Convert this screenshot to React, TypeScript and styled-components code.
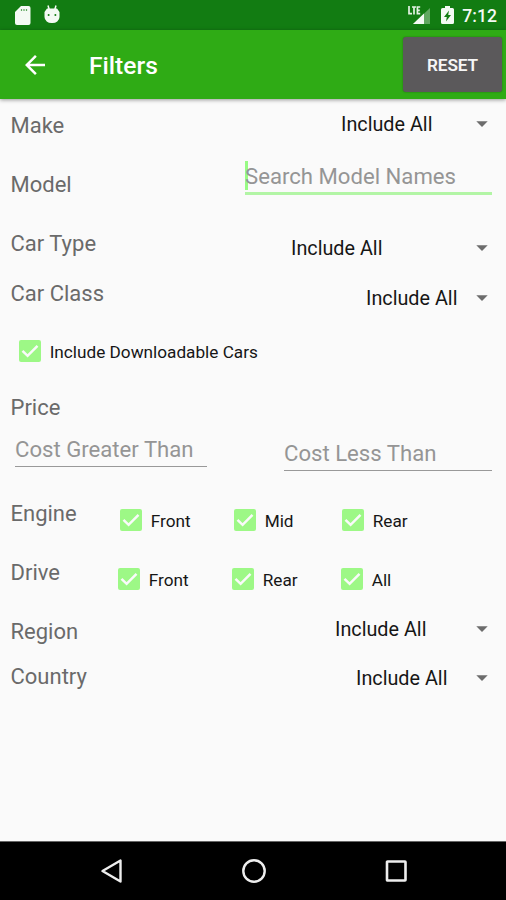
import React from "react";
import styled, { createGlobalStyle } from "styled-components";

const GlobalStyle = createGlobalStyle`
  *, *::before, *::after { box-sizing: border-box; }
  body { margin: 0; background: #fafafa; font-family: Roboto, "Liberation Sans", sans-serif; }
  button, input { font-family: inherit; }
`;

const Screen = styled.div`
  width: 506px;
  height: 900px;
  display: flex;
  flex-direction: column;
  overflow: hidden;
  background: #fafafa;
`;

const StatusBar = styled.header`
  height: 30px;
  flex: none;
  display: flex;
  align-items: center;
  padding: 0 9px 0 14px;
  background: #127c12;
  color: #f4faf4;
`;

const StatusIcon = styled.svg<{ $gap: number }>`
  display: block;
  flex: none;
  margin-right: ${(p) => p.$gap}px;
`;

const Spacer = styled.div`
  flex: 1;
`;

const Clock = styled.span`
  font-size: 17.6px;
  font-weight: 500;
  line-height: 20px;
  padding-top: 2px;
`;

const AppBar = styled.div`
  height: 69px;
  flex: none;
  display: flex;
  align-items: center;
  padding: 0 4px 0 20px;
  background: #2fab15;
  color: #fff;
  box-shadow: 0 1px 4px rgba(0, 0, 0, 0.4);
`;

const BackButton = styled.button`
  width: 30px;
  height: 30px;
  padding: 0;
  border: 0;
  background: none;
  color: #fff;
`;

const Title = styled.h1`
  margin: 0 0 0 39px;
  flex: 1;
  font-size: 24.6px;
  font-weight: 500;
  line-height: 30px;
  padding-top: 2px;
`;

const ResetButton = styled.button`
  width: 99px;
  height: 55px;
  padding: 1px 0 0;
  border: 0;
  border-radius: 3px;
  background: #5b595b;
  color: #f6f6f6;
  font-size: 17.2px;
  font-weight: 600;
  letter-spacing: -0.1px;
  box-shadow: 0 0 2px rgba(0, 0, 0, 0.35);
`;

const Form = styled.main`
  flex: 1;
  display: flex;
  flex-direction: column;
  padding: 13px 14px 0 11px;
`;

const Row = styled.div<{ $height: number }>`
  height: ${(p) => p.$height}px;
  flex: none;
  display: flex;
  align-items: flex-start;
  justify-content: space-between;
`;

const Label = styled.label<{ $lift?: number }>`
  margin: ${(p) => 1 - (p.$lift ?? 0)}px 0 0 -0.5px;
  font-size: 22px;
  line-height: 26px;
  color: #6a6a6a;
`;

const Select = styled.button<{ $width: number; $shift: number }>`
  width: ${(p) => p.$width}px;
  height: 26px;
  margin-top: ${(p) => p.$shift}px;
  padding: 0 4px 0 0;
  border: 0;
  background: none;
  display: flex;
  align-items: center;
  justify-content: space-between;
  font-size: 19.8px;
  line-height: 26px;
  color: #161616;
  white-space: nowrap;
`;

const SelectValue = styled.span`
  padding-top: 1px;
`;

const Field = styled.div<{ $width: number; $shift: number; $active?: boolean }>`
  width: ${(p) => p.$width}px;
  height: 33px;
  margin-top: ${(p) => p.$shift}px;
  display: flex;
  border-bottom: ${(p) => (p.$active ? "3px solid #b2f5a5" : "1px solid #999")};
`;

const Caret = styled.span`
  width: 3px;
  height: 29px;
  margin: -1px -3px 0 0;
  background: #98fb85;
`;

const Input = styled.input<{ $lift?: number }>`
  width: 100%;
  height: 30px;
  margin-top: ${(p) => -(p.$lift ?? 0)}px;
  padding: 0;
  border: 0;
  outline: 0;
  background: none;
  font-size: 22.15px;
  &::placeholder { color: #959595; opacity: 1; }
`;

const PriceFields = styled.div`
  height: 72px;
  flex: none;
  display: flex;
  align-items: flex-start;
  justify-content: space-between;
  padding-left: 4px;
`;

const Options = styled.div<{ $columns: string; $shift: number; $indent: number }>`
  display: grid;
  grid-template-columns: ${(p) => p.$columns};
  margin-top: ${(p) => p.$shift}px;
  padding-left: ${(p) => p.$indent}px;
  flex: none;
`;

const Check = styled.div`
  height: 26px;
  display: flex;
  align-items: center;
  gap: 8.7px;
  font-size: 17.2px;
  color: #161616;
  white-space: nowrap;
`;

const CheckLabel = styled.span`
  line-height: 24px;
  padding-top: 1px;
`;

const Box = styled.svg`
  display: block;
  flex: none;
  width: 22px;
  height: 22px;
  border-radius: 2px;
  background: #9df886;
`;

const NavBar = styled.nav`
  height: 59px;
  flex: none;
  display: flex;
  align-items: center;
  justify-content: space-between;
  padding: 0 98px 0 100px;
  border-top: 1px solid #666;
  background: #000;
`;

const Arrow = () => (
  <svg width="12" height="8" viewBox="0 0 12 8">
    <path d="M.3 1.200h11.400L6 7z" fill="#6c6c6c" />
  </svg>
);

function Dropdown({ width, shift }: { width: number; shift: number }) {
  return (
    <Select $width={width} $shift={shift}>
      <SelectValue>Include All</SelectValue>
      <Arrow />
    </Select>
  );
}

function Checkbox({ label }: { label: string }) {
  return (
    <Check>
      <Box viewBox="0 0 22 22">
        <path d="M3.500 10.800 8.600 15.800 18.500 5.800" fill="none" stroke="#fafafa" strokeWidth="2.500" />
      </Box>
      <CheckLabel>{label}</CheckLabel>
    </Check>
  );
}

export default function App() {
  return (
    <Screen>
      <GlobalStyle />
      <StatusBar>
        <StatusIcon $gap={13} width="17" height="20" viewBox="0 0 17 20">
          <path d="M7 1h7.500a2 2 0 0 1 2 2v15a2 2 0 0 1-2 2H3a2 2 0 0 1-2-2V7z" fill="#f4faf4" />
          <path d="M7.500 4v2M10 4v2M12.500 4v2" stroke="#127c12" strokeWidth="1.200" opacity=".65" />
        </StatusIcon>
        <StatusIcon $gap={0} width="16" height="20" viewBox="0 0 16 20">
          <path d="M4 .5l1.200 4M12 .5l-1.200 4" stroke="#f4faf4" strokeWidth="1.500" />
          <path d="M3 3.500h10l2.500 3.500v5A7 6 0 0 1 8 18a7 6 0 0 1-7.500-6V7z" fill="#f4faf4" />
          <circle cx="4.600" cy="10" r="1" fill="#127c12" />
          <circle cx="11.400" cy="10" r="1" fill="#127c12" />
        </StatusIcon>
        <Spacer />
        <StatusIcon $gap={9} width="26" height="20" viewBox="0 0 26 20">
          <path d="M24 3v16H7z" fill="#f4faf4" opacity=".35" />
          <path d="M18 8.500V19H7z" fill="#f4faf4" />
          <path d="M3 1v7.700h3M6 2h4M8 2v7.500M14.200 2h-2.800v6.700h2.800M11.400 5.400h2.400" fill="none" stroke="#e4f2e4" strokeWidth="1.700" />
        </StatusIcon>
        <StatusIcon $gap={8} width="13" height="20" viewBox="0 0 13 20">
          <path d="M4 1h5v2h2.500A1.500 1.500 0 0 1 13 4.500v13a1.500 1.500 0 0 1-1.500 1.500h-10A1.500 1.500 0 0 1 0 17.500v-13A1.500 1.500 0 0 1 1.500 3H4z" fill="#f4faf4" />
          <path d="M8 5.500 3 12h2.800L5 16.500 10 10H7.200z" fill="#127c12" />
        </StatusIcon>
        <Clock>7:12</Clock>
      </StatusBar>
      <AppBar>
        <BackButton aria-label="Back">
          <svg width="30" height="30" viewBox="0 0 24 24">
            <path d="M20 11H7.830l5.590-5.590L12 4l-8 8 8 8 1.410-1.410L7.830 13H20z" fill="#fff" />
          </svg>
        </BackButton>
        <Title>Filters</Title>
        <ResetButton>RESET</ResetButton>
      </AppBar>
      <Form>
        <Row $height={59}>
          <Label>Make</Label>
          <Dropdown width={151} shift={-1} />
        </Row>
        <Row $height={60}>
          <Label>Model</Label>
          <Field $width={247} $shift={-9} $active>
            <Caret />
            <Input $lift={1} placeholder="Search Model Names" />
          </Field>
        </Row>
        <Row $height={49}>
          <Label $lift={1}>Car Type</Label>
          <Dropdown width={201} shift={4} />
        </Row>
        <Row $height={59}>
          <Label>Car Class</Label>
          <Dropdown width={126} shift={5} />
        </Row>
        <Row $height={55}>
          <Options $columns="auto" $shift={-1} $indent={8}>
            <Checkbox label="Include Downloadable Cars" />
          </Options>
        </Row>
        <Row $height={34}>
          <Label>Price</Label>
        </Row>
        <PriceFields>
          <Field $width={192} $shift={6}>
            <Input placeholder="Cost Greater Than" />
          </Field>
          <Field $width={208} $shift={10}>
            <Input placeholder="Cost Less Than" />
          </Field>
        </PriceFields>
        <Row $height={59}>
          <Label>Engine</Label>
          <Options $columns="114px 108px 150px" $shift={7} $indent={0}>
            <Checkbox label="Front" />
            <Checkbox label="Mid" />
            <Checkbox label="Rear" />
          </Options>
        </Row>
        <Row $height={59}>
          <Label>Drive</Label>
          <Options $columns="114px 109px 151px" $shift={7} $indent={0}>
            <Checkbox label="Front" />
            <Checkbox label="Rear" />
            <Checkbox label="All" />
          </Options>
        </Row>
        <Row $height={45}>
          <Label>Region</Label>
          <Dropdown width={157} shift={-2} />
        </Row>
        <Row $height={40}>
          <Label>Country</Label>
          <Dropdown width={136} shift={2} />
        </Row>
      </Form>
      <NavBar>
        <svg width="23" height="26" viewBox="0 0 23 26">
          <path d="M20.500 2.500v21L2.500 13z" fill="none" stroke="#eee" strokeWidth="2.400" strokeLinejoin="round" />
        </svg>
        <svg width="26" height="26" viewBox="0 0 26 26">
          <circle cx="13" cy="13" r="10.700" fill="none" stroke="#eee" strokeWidth="2.400" />
        </svg>
        <svg width="23" height="26" viewBox="0 0 23 26">
          <rect x="2" y="3.500" width="18.500" height="19" rx=".5" fill="none" stroke="#eee" strokeWidth="2.600" />
        </svg>
      </NavBar>
    </Screen>
  );
}
